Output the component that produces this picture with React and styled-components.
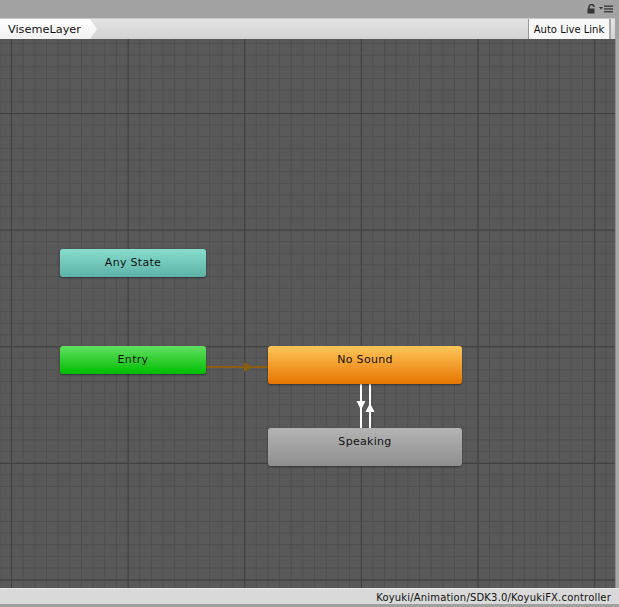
import React from "react";
import styled, { createGlobalStyle } from "styled-components";

const Global = createGlobalStyle`
  html, body { margin: 0; padding: 0; background: #a2a2a2; }
  body { font-family: "DejaVu Sans", Verdana, sans-serif; }
`;

const Window = styled.div`
  width: 619px;
  height: 607px;
  display: flex;
  flex-direction: column;
  background: #a2a2a2;
  overflow: hidden;
`;

const TitleBar = styled.div`
  height: 18px;
  flex: none;
  display: flex;
  justify-content: flex-end;
  align-items: center;
  gap: 3px;
  padding-right: 6px;
  background: #a3a3a3;
`;

const Toolbar = styled.div`
  height: 20px;
  flex: none;
  display: flex;
  align-items: stretch;
  border-top: 1px solid #c9c9c9;
  background: linear-gradient(#e4e4e4, #d3d3d3);
  margin-right: 4px;
`;

const Crumb = styled.div`
  width: 97px;
  padding-left: 8px;
  box-sizing: border-box;
  display: flex;
  align-items: center;
  font-size: 11.3px;
  color: #111;
  background: linear-gradient(#ffffff, #f1f1f1);
  clip-path: polygon(0 0, 90px 0, 97px 50%, 90px 100%, 0 100%);
`;

const Spacer = styled.div`
  flex: 1;
`;

const ToolButton = styled.div`
  width: 80px;
  display: flex;
  align-items: center;
  justify-content: center;
  font-size: 10px;
  color: #111;
  background: #f8f8f8;
  border-left: 1px solid #9a9a9a;
  border-right: 2px solid #a9a9a9;
  margin-right: 4px;
`;

const Body = styled.div`
  flex: 1;
  display: flex;
  min-height: 0;
`;

const Canvas = styled.div`
  position: relative;
  width: 615px;
  flex: none;
  background-color: #595959;
  background-image:
    linear-gradient(to right, #3f3f3f 1px, transparent 1px),
    linear-gradient(to bottom, #3f3f3f 1px, transparent 1px),
    linear-gradient(to right, #4e4e4e 1px, transparent 1px),
    linear-gradient(to bottom, #4e4e4e 1px, transparent 1px);
  background-size: 116.67px 116.67px, 116.67px 116.67px, 11.667px 11.667px, 11.667px 11.667px;
  background-position: 11px 74px, 11px 74px, 11px 4px, 11px 4px;
  overflow: hidden;
`;

const SideEdge = styled.div`
  flex: 1;
  background: #a8a8a8;
  border-left: 1px solid #8a8a8a;
`;

const palettes = {
  any: ["#86ddcd", "#5db3a7"],
  entry: ["#62e062", "#00bd00"],
  default: ["#ffc65a", "#e67400"],
  normal: ["#b4b4b4", "#8e8e8e"],
};

const StateNode = styled.div`
  position: absolute;
  box-sizing: border-box;
  display: flex;
  justify-content: center;
  align-items: flex-start;
  padding-top: 6px;
  font-size: 11px;
  letter-spacing: 0.3px;
  line-height: 16px;
  color: #111;
  border-radius: 3px;
  background: linear-gradient(${(p) => palettes[p.$kind][0]}, ${(p) => palettes[p.$kind][1]});
  box-shadow: 0 1px 2px rgba(0, 0, 0, 0.45);
`;

const Overlay = styled.svg`
  position: absolute;
  left: 0;
  top: 0;
  pointer-events: none;
`;

const StatusBar = styled.div`
  height: 16px;
  flex: none;
  display: flex;
  justify-content: flex-end;
  align-items: center;
  padding-right: 8px;
  padding-top: 1px;
  box-sizing: border-box;
  font-size: 10px;
  letter-spacing: 0.18px;
  color: #111;
  background: #d9d9d9;
  border-top: 1px solid #ececec;
`;

const BottomEdge = styled.div`
  height: 3px;
  flex: none;
  background: #a0a0a0;
`;

const nodes = [
  { id: "any", label: "Any State", kind: "any", x: 60, y: 210, w: 146, h: 28 },
  { id: "entry", label: "Entry", kind: "entry", x: 60, y: 307, w: 146, h: 28 },
  { id: "nosound", label: "No Sound", kind: "default", x: 268, y: 307, w: 194, h: 38 },
  { id: "speaking", label: "Speaking", kind: "normal", x: 268, y: 389, w: 194, h: 38 },
];

function LockIcon() {
  return (
    <svg width="9" height="10" viewBox="0 0 9 10">
      <path d="M2 5V3a2.5 2.5 0 0 1 5 0" fill="none" stroke="#333" strokeWidth="1.4" />
      <rect x="0.5" y="4.5" width="7" height="5" fill="#333" />
    </svg>
  );
}

function MenuIcon() {
  return (
    <svg width="14" height="8" viewBox="0 0 14 8">
      <path d="M0 2h4L2 4.5z" fill="#333" />
      <rect x="5" y="0.5" width="9" height="1.3" fill="#333" />
      <rect x="5" y="3.3" width="9" height="1.3" fill="#333" />
      <rect x="5" y="6.1" width="9" height="1.3" fill="#333" />
    </svg>
  );
}

export default function App() {
  return (
    <>
      <Global />
      <Window>
        <TitleBar>
          <LockIcon />
          <MenuIcon />
        </TitleBar>
        <Toolbar>
          <Crumb>VisemeLayer</Crumb>
          <Spacer />
          <ToolButton>Auto Live Link</ToolButton>
        </Toolbar>
        <Body>
          <Canvas>
            <Overlay width="615" height="548">
              <line x1="206" y1="328" x2="268" y2="328" stroke="#8a5e0c" strokeWidth="2" />
              <path d="M244 323.5L253 328L244 332.5z" fill="#8a5e0c" />
              <line x1="361" y1="345" x2="361" y2="389" stroke="#fff" strokeWidth="2" />
              <path d="M356.5 362L365.5 362L361 371z" fill="#fff" />
              <line x1="370" y1="345" x2="370" y2="389" stroke="#fff" strokeWidth="2" />
              <path d="M365.5 373L374.5 373L370 364z" fill="#fff" />
            </Overlay>
            {nodes.map((n) => (
              <StateNode
                key={n.id}
                $kind={n.kind}
                style={{ left: n.x, top: n.y, width: n.w, height: n.h }}
              >
                {n.label}
              </StateNode>
            ))}
          </Canvas>
          <SideEdge />
        </Body>
        <StatusBar>Koyuki/Animation/SDK3.0/KoyukiFX.controller</StatusBar>
        <BottomEdge />
      </Window>
    </>
  );
}
